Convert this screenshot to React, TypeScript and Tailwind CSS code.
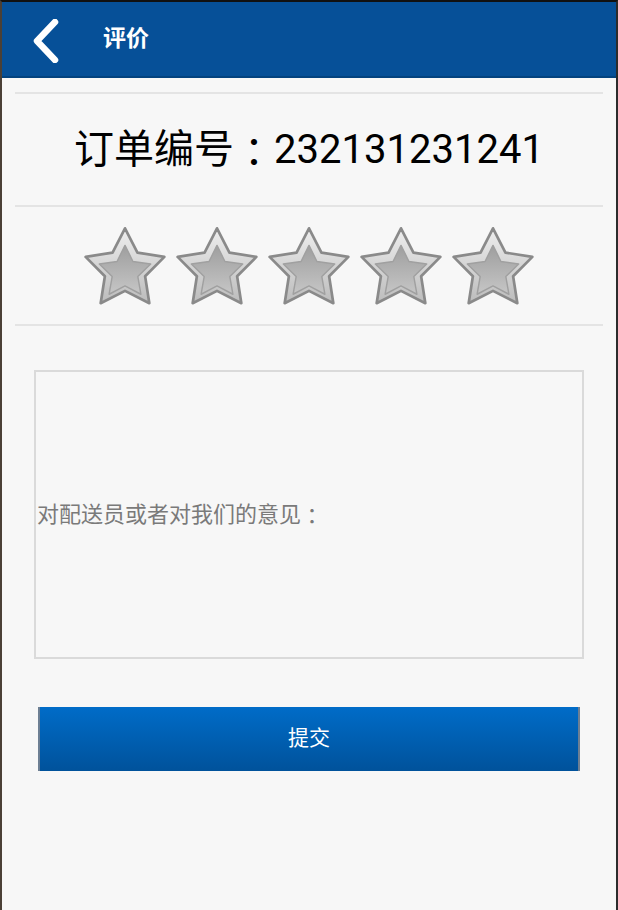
import React from 'react';

const FONT = '"Roboto", "Noto Sans CJK SC", sans-serif';
const COLON_FONT = '"Noto Sans CJK TC", sans-serif';

// points of a five-pointed star, top point up
const starPoints = (cx: number, cy: number, R: number, r: number) => {
  const pts: string[] = [];
  for (let i = 0; i < 10; i++) {
    const rad = i % 2 === 0 ? R : r;
    const a = (Math.PI / 5) * i - Math.PI / 2;
    pts.push(`${(cx + rad * Math.cos(a)).toFixed(2)},${(cy + rad * Math.sin(a)).toFixed(2)}`);
  }
  return pts.join(' ');
};

const OUTER = starPoints(50, 53, 46, 23.5);
const INNER = starPoints(50, 56, 30, 15);

const Star = ({ id }: { id: number }) => (
  <svg width="90" height="90" viewBox="0 0 100 100">
    <defs>
      <linearGradient id={`o${id}`} x1="0" y1="0" x2="0" y2="1">
        <stop offset="0" stopColor="#eeeeee" />
        <stop offset="1" stopColor="#bcbcbc" />
      </linearGradient>
      <linearGradient id={`i${id}`} x1="0" y1="0" x2="0" y2="1">
        <stop offset="0" stopColor="#9e9e9e" />
        <stop offset="1" stopColor="#c6c6c6" />
      </linearGradient>
    </defs>
    <polygon points={OUTER} fill={`url(#o${id})`} stroke="#8a8a8a" strokeWidth="3" strokeLinejoin="round" />
    <polygon points={INNER} fill={`url(#i${id})`} stroke="#a0a0a0" strokeWidth="1.6" strokeLinejoin="round" />
  </svg>
);

const Divider = () => <div className="h-[2px] bg-[#e4e4e4]" />;

export default function App() {
  return (
    <div
      className="flex h-[910px] w-[618px] flex-col border-t-2 border-l-2 border-r-2 border-t-[#111] border-l-[#4b4036] border-r-[#2c2c2c] bg-[#f7f7f7]"
      style={{ fontFamily: FONT }}
    >
      <header className="flex h-[76px] shrink-0 items-center border-b-2 border-[#03437f] bg-[#065098]">
        <svg width="30" height="44" viewBox="0 0 30 44" className="ml-[29px] mt-[4px]">
          <polyline
            points="24,3 6,22 24,41"
            fill="none"
            stroke="#ffffff"
            strokeWidth="6.5"
            strokeLinecap="round"
            strokeLinejoin="round"
          />
        </svg>
        <span className="ml-[42px] text-[23px] font-bold text-white">评价</span>
      </header>

      <div className="flex flex-col px-[13px] pt-[14px]">
        <Divider />
        <div className="flex h-[111px] items-center justify-center text-[40px] text-black">
          订单编号<span style={{ fontFamily: COLON_FONT }}>：</span>232131231241
        </div>
        <Divider />
        <div className="flex h-[117px] items-center justify-center gap-[2px] pt-[2px]">
          {[0, 1, 2, 3, 4].map((i) => (
            <Star key={i} id={i} />
          ))}
        </div>
        <Divider />

        <div className="mx-[19px] mt-[44px] flex h-[289px] items-center border-2 border-[#dadada] pl-[1px] text-[22px] text-[#7a7a7a]">
          对配送员或者对我们的意见<span style={{ fontFamily: COLON_FONT }}>：</span>
        </div>

        <button className="mx-[23px] mt-[48px] flex h-[64px] items-center justify-center border-x-2 border-x-[#6d7f93] bg-gradient-to-b from-[#006cc8] to-[#00529b] text-[21px] text-white">
          提交
        </button>
      </div>
    </div>
  );
}
